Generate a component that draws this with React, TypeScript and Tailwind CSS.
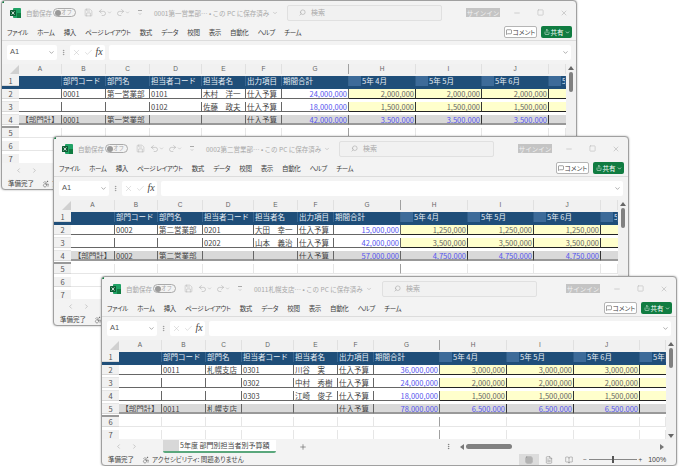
import { Check, ChevronDown, ChevronLeft, ChevronRight, Minus, MoreVertical, Plus, Save, Search, Square, Undo2, Redo2, X, MessageSquare, Share, Accessibility, Grid3x3, FileText, BookOpen } from "lucide-react"

type SheetRow = { total?: boolean; cells: string[] }

type Book = {
  pos: string
  cols: string
  title: string
  titleW: string
  rows: SheetRow[]
}

const LETTERS = ["A", "B", "C", "D", "E", "F", "G", "H", "I", "J", ""]
const HEAD = ["", "部門コード", "部門名", "担当者コード", "担当者名", "出力項目", "期間合計"]
const MONTHS = ["5年 4月", "5年 5月", "5年 6月", "5年 7月"]
const MENU = ["ファイル", "ホーム", "挿入", "ページ レイアウト", "数式", "データ", "校閲", "表示", "自動化", "ヘルプ", "チーム"]

const row = (a: string, b: string, c: string, d: string, e: string, g: string, h: string, total = false): SheetRow => ({
  total,
  cells: [a, b, c, d, e, "仕入予算", g, h, h, h, ""],
})

const BOOKS: Book[] = [
  {
    pos: "left-[1px] top-0",
    cols: "grid-cols-[17px_43px_44px_44px_52px_44px_36px_67px_67px_66px_67px_1fr]",
    title: "0001第一営業部…",
    titleW: "w-[133px]",
    rows: [
      row("", "0001", "第一営業部", "0101", "木村　洋一", "24,000,000", "2,000,000"),
      row("", "", "", "0102", "佐藤　政夫", "18,000,000", "1,500,000"),
      row("【部門計】", "0001", "第一営業部", "", "", "42,000,000", "3,500,000", true),
    ],
  },
  {
    pos: "left-[53px] top-[136px]",
    cols: "grid-cols-[17px_44px_43px_45px_51px_44px_36px_67px_67px_66px_67px_1fr]",
    title: "0002第二営業部…",
    titleW: "w-[133px]",
    rows: [
      row("", "0002", "第二営業部", "0201", "大田　幸一", "15,000,000", "1,250,000"),
      row("", "", "", "0202", "山本　義治", "42,000,000", "3,500,000"),
      row("【部門計】", "0002", "第二営業部", "", "", "57,000,000", "4,750,000", true),
    ],
  },
  {
    pos: "left-[101px] top-[276px]",
    cols: "grid-cols-[17px_43px_44px_36px_52px_44px_36px_66px_67px_67px_66px_1fr]",
    title: "0011札幌支店…",
    titleW: "w-[128px]",
    rows: [
      row("", "0011", "札幌支店", "0301", "川谷　実", "36,000,000", "3,000,000"),
      row("", "", "", "0302", "中村　秀樹", "24,000,000", "2,000,000"),
      row("", "", "", "0303", "江崎　俊子", "18,000,000", "1,500,000"),
      row("【部門計】", "0011", "札幌支店", "", "", "78,000,000", "6,500,000", true),
    ],
  },
]

function ExcelLogo() {
  return (
    <svg width="11" height="10" viewBox="0 0 11 10">
      <rect x="3" y="0" width="8" height="10" rx="1" fill="#21a366" />
      <rect x="7" y="5" width="4" height="5" fill="#107c41" />
      <rect x="0" y="2" width="6" height="6" rx="0.5" fill="#0b5c33" />
      <path d="M1.6 3.4 L4.4 6.6 M4.4 3.4 L1.6 6.6" stroke="#fff" strokeWidth="0.8" />
    </svg>
  )
}

function TitleBar({ title, titleW }: { title: string; titleW: string }) {
  return (
    <div className="flex h-[24px] items-center pr-[8px] text-[6.5px] text-[#a8a8a8]">
      <div className="ml-[8px] flex w-[16px] shrink-0 items-center">
        <ExcelLogo />
      </div>
      <span className="w-[27px] shrink-0">自動保存</span>
      <div className="flex h-[9px] w-[23px] shrink-0 items-center justify-between rounded-full border border-[#aaa] pl-[1px] pr-[3px]">
        <div className="size-[6px] rounded-full bg-[#999]" />
        <span className="text-[5.5px]">オフ</span>
      </div>
      <Save className="ml-[8px] size-[9px] shrink-0 text-[#aaa]" strokeWidth={1.2} />
      <Undo2 className="ml-[5px] size-[9px] shrink-0 text-[#aaa]" strokeWidth={1.4} />
      <ChevronDown className="size-[5px] shrink-0" />
      <Redo2 className="ml-[4px] size-[9px] shrink-0 text-[#aaa]" strokeWidth={1.4} />
      <ChevronDown className="size-[5px] shrink-0" />
      <div className="ml-[8px] mr-[12px] flex w-[4px] shrink-0 flex-col items-center gap-[1px]">
        <div className="h-px w-[4px] bg-[#aaa]" />
        <ChevronDown className="size-[4px]" strokeWidth={3} />
      </div>
      <span className={`flex ${titleW} shrink-0 items-center gap-[3px] whitespace-nowrap`}>
        {title} • この PC に保存済み
        <ChevronDown className="size-[6px]" />
      </span>
      <div className="flex h-[16px] w-[155px] shrink-0 items-center gap-[5px] rounded-[2px] border border-[#e0e0e0] bg-[#f1f1f1] pl-[11px] text-[7px]">
        <Search className="size-[7px] -scale-x-100" />
        <span>検索</span>
      </div>
      <div className="ml-auto flex h-[9px] w-[34px] shrink-0 items-center justify-center bg-[#c4c4c4] text-[6.5px] text-[#f2f2f2]">
        サインイン
      </div>
      <Minus className="ml-[13px] size-[8px] shrink-0 text-[#bbb]" />
      <Square className="ml-[16px] size-[7px] shrink-0 text-[#bbb]" />
      <X className="ml-[16px] size-[8px] shrink-0 text-[#bbb]" />
    </div>
  )
}

function MenuBar() {
  return (
    <div className="flex h-[16px] items-center border-b border-[#dcdcdc] pl-[5px] pr-[4px] text-[6.5px] text-[#3c3c3c] [font-feature-settings:'palt']">
      <div className="flex flex-1 gap-[9.2px] whitespace-nowrap tracking-[-0.4px]">
        {MENU.map((m) => (
          <span key={m}>{m}</span>
        ))}
      </div>
      <div className="flex h-[12px] w-[33px] items-center justify-center gap-[1px] rounded-[2px] border border-[#b5b5b5] bg-white text-[#444]">
        <MessageSquare className="size-[6px]" />
        コメント
      </div>
      <div className="ml-[4px] flex h-[12px] w-[31px] items-center justify-center gap-[1px] rounded-[2px] bg-[#107c41] text-white">
        <Share className="size-[6px]" />
        共有
        <ChevronDown className="size-[5px]" strokeWidth={3} />
      </div>
    </div>
  )
}

function FormulaBar() {
  return (
    <div className="flex h-[23px] items-center px-[5px] text-[7.5px] text-[#555]">
      <div className="flex h-[15px] w-[50px] items-center justify-between rounded-[2px] bg-white pl-[3px] pr-[2px] font-['Liberation_Sans',sans-serif]">
        A1
        <ChevronDown className="size-[7px] text-[#777]" />
      </div>
      <MoreVertical className="mx-[3px] size-[7px] text-[#888]" />
      <div className="flex h-[15px] w-[35px] items-center justify-around rounded-[2px] bg-white px-[1px]">
        <X className="size-[9px] text-[#bbb]" strokeWidth={1.2} />
        <Check className="size-[9px] text-[#bbb]" strokeWidth={1.2} />
        <span className="font-['Liberation_Serif',serif] text-[10px] italic leading-none text-[#444]">fx</span>
      </div>
      <div className="ml-[4px] flex h-[15px] flex-1 items-center justify-end rounded-[2px] bg-white pr-[2px]">
        <ChevronDown className="size-[7px] text-[#777]" />
      </div>
    </div>
  )
}

function HeaderRow({ cols, n }: { cols: string; n: number }) {
  return (
    <div className={`grid h-[13px] ${cols} bg-[#1f4e79] text-[7.5px] text-[#e6edf4]`}>
      <div className="flex items-center justify-center border-b border-[#d8d8d8] bg-[#f1f1f1] text-[#555]">{n}</div>
      {HEAD.map((h, i) => (
        <div key={i} className="flex items-center overflow-hidden whitespace-nowrap border-r border-[#3a668f] pl-[1px]">
          {h}
        </div>
      ))}
      {MONTHS.map((m) => (
        <div key={m} className="flex items-center overflow-hidden whitespace-nowrap border-r border-[#2f5c87]">
          <div className="mr-[1px] h-full w-[12px] shrink-0 bg-[#3d6b99]" />
          {m}
        </div>
      ))}
      <div />
    </div>
  )
}

function DataRow({ cols, n, data }: { cols: string; n: number; data: SheetRow }) {
  const t = !!data.total
  return (
    <div className={`grid h-[13px] ${cols} text-[7.5px] text-[#444]`}>
      <div className="flex items-center justify-center border-b border-[#d8d8d8] bg-[#f1f1f1] text-[#555]">{n}</div>
      {data.cells.map((c, i) => {
        const month = i > 6
        const money = i >= 6
        const bg = t ? "bg-[#d9d9d9]" : month ? "bg-[#ffffcc]" : "bg-white"
        const border = t ? "border-b-2 border-[#999]" : month ? "border-b border-[#222]" : "border-b border-[#666]"
        const edge = i === 10 ? "" : month ? "border-r border-r-[#333]" : "border-r border-r-[#666]"
        const color = money && (t || !month) ? "text-[#5555ee]" : money ? "text-[#666]" : ""
        const align = money ? "justify-end pr-[1px]" : i === 0 ? "justify-center" : "pl-[1px]"
        return (
          <div key={i} className={`flex items-center overflow-hidden whitespace-nowrap pt-[1px] ${bg} ${border} ${edge} ${color} ${align}`}>
            {c}
          </div>
        )
      })}
      <div className={t ? "border-b-2 border-[#999]" : "border-b border-[#e6e6e6]"} />
    </div>
  )
}

function EmptyRow({ cols, n }: { cols: string; n: number }) {
  return (
    <div className={`grid h-[13px] ${cols} text-[7.5px]`}>
      <div className="flex items-center justify-center border-b border-[#d8d8d8] bg-[#f1f1f1] text-[#555]">{n}</div>
      {LETTERS.map((l, i) => (
        <div key={i} className={`border-b border-[#e6e6e6] ${l === "G" ? "border-r border-r-[#a0a0a0]" : "border-r border-r-[#e6e6e6]"}`} />
      ))}
      <div />
    </div>
  )
}

function Sheet({ cols, rows }: { cols: string; rows: SheetRow[] }) {
  const blanks = Array.from({ length: 6 - rows.length }, (_, i) => rows.length + 2 + i)
  return (
    <div className="flex h-[100px] overflow-hidden">
      <div className="min-w-0 flex-1 bg-white">
        <div className={`grid h-[12px] ${cols} bg-[#f1f1f1] font-['Liberation_Sans',sans-serif] text-[6.5px] text-[#666]`}>
          <div className="flex items-end justify-end">
            <div className="size-0 border-b-[9px] border-l-[9px] border-b-[#d0d0d0] border-l-transparent" />
          </div>
          {LETTERS.map((l, i) => (
            <div key={i} className={`flex items-center justify-center ${l === "G" ? "border-r border-[#a0a0a0]" : "border-r border-[#e0e0e0]"}`}>
              {l}
            </div>
          ))}
          <div />
        </div>
        <HeaderRow cols={cols} n={1} />
        {rows.map((r, i) => (
          <DataRow key={i} cols={cols} n={i + 2} data={r} />
        ))}
        {blanks.map((n) => (
          <EmptyRow key={n} cols={cols} n={n} />
        ))}
      </div>
      <div className="flex w-[10px] shrink-0 flex-col items-center justify-between bg-[#f1f1f1] py-[1px] text-[#777]">
        <div className="flex flex-col items-center gap-[2px] pt-[1px]">
          <div className="size-0 border-x-[3px] border-b-[4px] border-x-transparent border-b-[#666]" />
          <div className="h-[20px] w-[4px] rounded-full bg-[#808080]" />
        </div>
        <div className="size-0 border-x-[3px] border-t-[4px] border-x-transparent border-t-[#666]" />
      </div>
    </div>
  )
}

function TabBar() {
  return (
    <div className="flex h-[15px] items-center text-[7px] text-[#444]">
      <ChevronLeft className="ml-[13px] size-[7px] text-[#aaa]" />
      <ChevronRight className="ml-[9px] size-[7px] text-[#aaa]" />
      <div className="ml-[25px] flex h-[13px] w-[113px] items-center overflow-hidden whitespace-nowrap rounded-b-[2px] border-b-2 border-[#5aa77c] bg-white">
        <div className="mr-[1px] h-full w-[16px] shrink-0 bg-[#d8d8d8]" />
        5年度 部門別担当者別予算額
      </div>
      <Plus className="ml-[23px] size-[8px] text-[#666]" />
      <MoreVertical className="ml-[138px] size-[7px] text-[#666]" />
      <div className="ml-[8px] size-0 border-y-[3px] border-r-[4px] border-y-transparent border-r-[#777]" />
      <div className="ml-[2px] h-[5px] w-[46px] rounded-full bg-[#808080]" />
      <div className="ml-auto mr-[12px] size-0 border-y-[3px] border-l-[4px] border-y-transparent border-l-[#777]" />
    </div>
  )
}

function StatusBar() {
  return (
    <div className="flex h-[11px] items-center text-[6.5px] text-[#444]">
      <span className="ml-[6px] w-[34px] shrink-0">準備完了</span>
      <Accessibility className="size-[8px] shrink-0" strokeWidth={1.4} />
      <span className="ml-[2px] w-[367px] shrink-0 [font-feature-settings:'palt']">アクセシビリティ: 問題ありません</span>
      <div className="flex h-full w-[20px] shrink-0 items-center justify-center bg-[#dcdcdc]">
        <Grid3x3 className="size-[8px] text-[#666]" strokeWidth={1.2} />
      </div>
      <FileText className="ml-[6px] size-[8px] shrink-0 text-[#666]" strokeWidth={1.2} />
      <BookOpen className="ml-[12px] size-[8px] shrink-0 text-[#666]" strokeWidth={1.2} />
      <span className="ml-[10px]">−</span>
      <div className="relative mx-[2px] h-[1px] w-[48px] shrink-0 bg-[#888]">
        <div className="absolute left-[23px] top-[-3px] h-[7px] w-[2px] bg-[#555]" />
      </div>
      <span>+</span>
      <span className="ml-[6px] font-['Liberation_Sans',sans-serif] text-[7px]">100%</span>
    </div>
  )
}

function Window({ book }: { book: Book }) {
  return (
    <div className={`absolute ${book.pos} flex h-[190px] w-[576px] flex-col overflow-hidden rounded-[4px] border border-[#a0a0a0] bg-[#f3f3f3] shadow-[0_0_2px_rgba(0,0,0,0.35)]`}>
      <div className="absolute left-0 top-0 size-[2px] bg-[#107c41]" />
      <TitleBar title={book.title} titleW={book.titleW} />
      <MenuBar />
      <FormulaBar />
      <Sheet cols={book.cols} rows={book.rows} />
      <TabBar />
      <StatusBar />
    </div>
  )
}

export default function App() {
  return (
    <div className="relative h-[466px] w-[682px] overflow-hidden bg-white font-['Noto_Sans_CJK_JP','Liberation_Sans',sans-serif] leading-none">
      {BOOKS.map((b) => (
        <Window key={b.title} book={b} />
      ))}
    </div>
  )
}
